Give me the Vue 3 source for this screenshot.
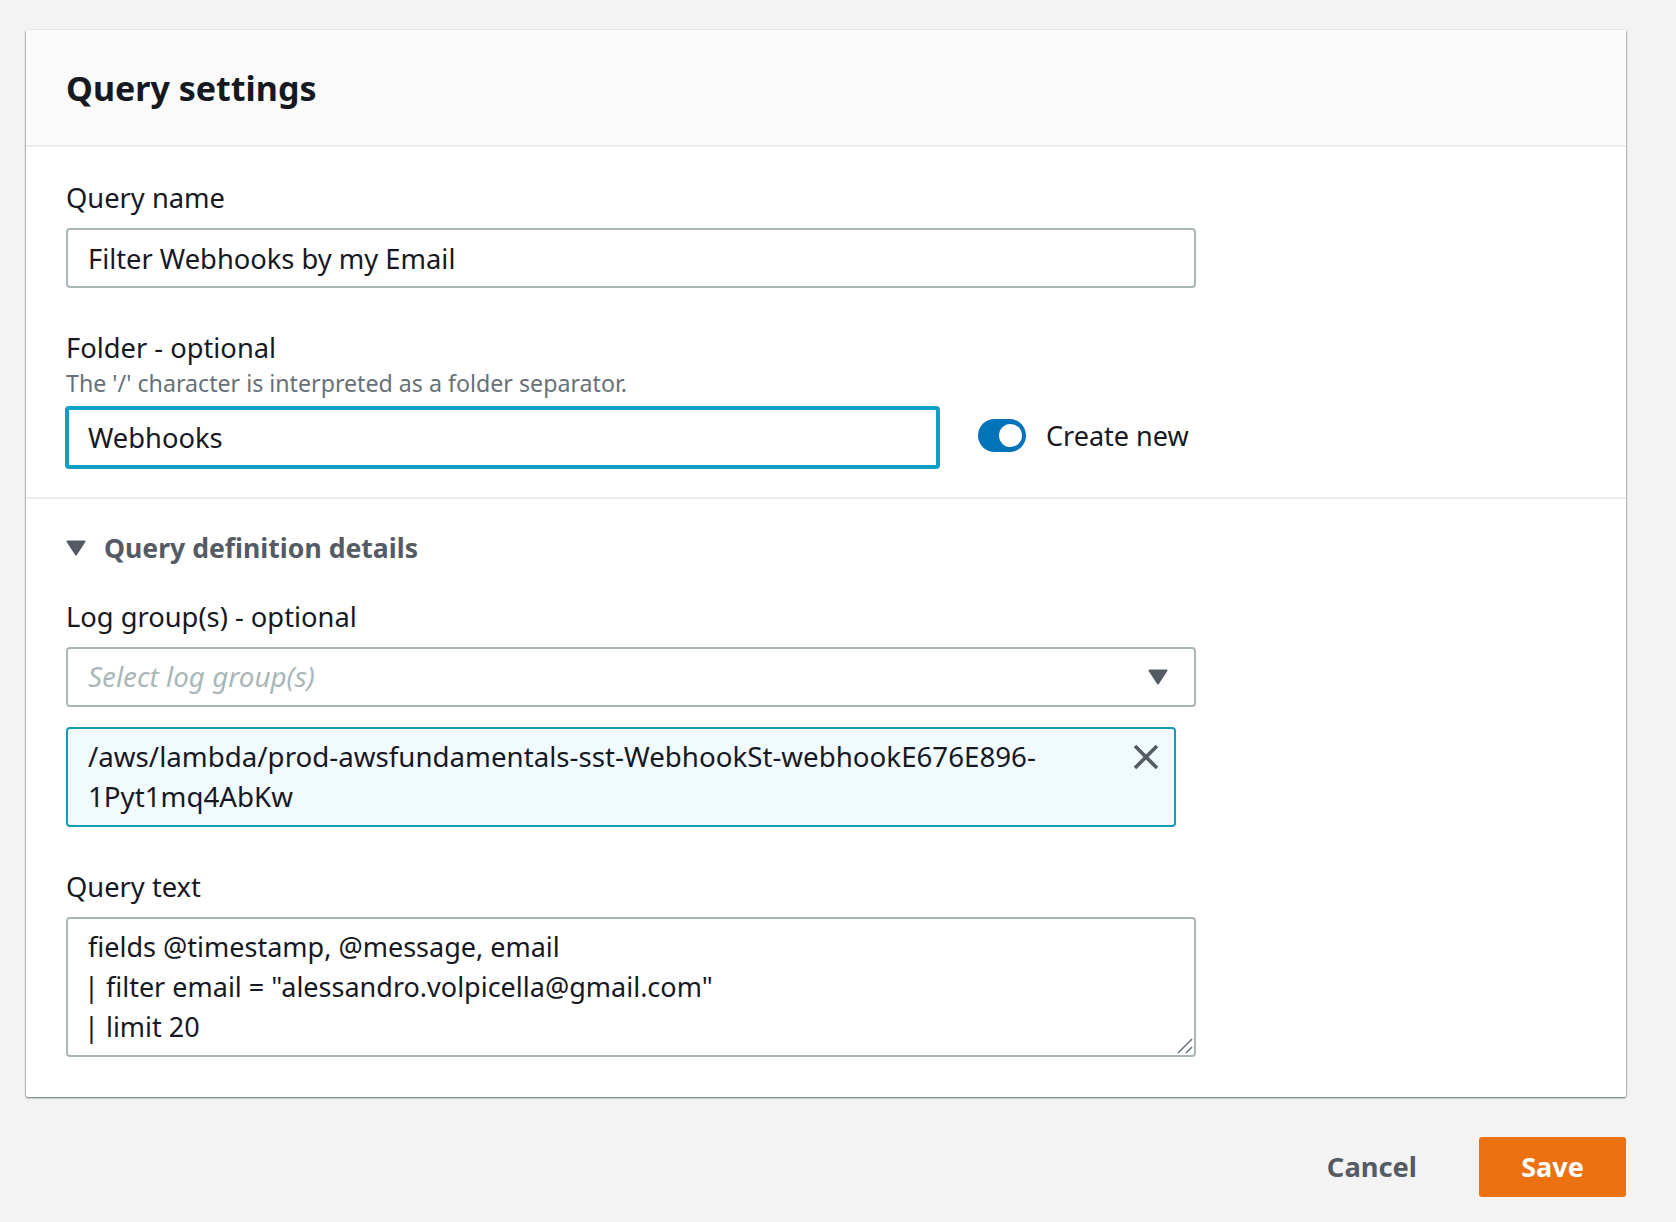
<script setup>
const queryLines = [
  { bar: false, text: 'fields @timestamp, @message, email' },
  { bar: true, text: ' filter email = "alessandro.volpicella@gmail.com"' },
  { bar: true, text: ' limit 20' },
]
const tokenLines = ['/aws/lambda/prod-awsfundamentals-sst-WebhookSt-webhookE676E896-', '1Pyt1mq4AbKw']
</script>

<template>
  <div class="page">
    <section class="card">
      <header class="card-head"><h2>Query settings</h2></header>
      <div class="block first">
        <div class="label">Query name</div>
        <div class="field wide"><span>Filter Webhooks by my Email</span></div>
        <div class="label folder-label">Folder - optional</div>
        <div class="hint">The '/' character is interpreted as a folder separator.</div>
        <div class="folder-row">
          <div class="field focus"><span>Webhooks</span></div>
          <div class="toggle-wrap">
            <span class="toggle"><span class="knob"></span></span>
            <span class="toggle-text">Create new</span>
          </div>
        </div>
      </div>
      <div class="block second">
        <div class="expander">
          <svg class="caret" viewBox="0 0 20 16"><path d="M1.5 1.5h17L10 14.5z" fill="#545b64" stroke="#545b64" stroke-width="2" stroke-linejoin="round"/></svg>
          <span>Query definition details</span>
        </div>
        <div class="label log-label">Log group(s) - optional</div>
        <div class="field wide select">
          <span class="placeholder">Select log group(s)</span>
          <svg class="select-caret" viewBox="0 0 20 16"><path d="M1.5 1.5h17L10 14.5z" fill="#545b64" stroke="#545b64" stroke-width="2" stroke-linejoin="round"/></svg>
        </div>
        <div class="token">
          <div v-for="l in tokenLines" :key="l" class="line">{{ l }}</div>
          <svg class="close" viewBox="0 0 26 26"><path d="M2 2l22 22M24 2L2 24" fill="none" stroke="#545b64" stroke-width="3.6"/></svg>
        </div>
        <div class="label text-label">Query text</div>
        <div class="textarea">
          <div v-for="l in queryLines" :key="l.text" class="line"><span v-if="l.bar" class="bar">|</span>{{ l.text }}</div>
          <svg class="grip" viewBox="0 0 16 16"><path d="M1 15L15 1M9 15l6-6" fill="none" stroke="#687078" stroke-width="1.5"/></svg>
        </div>
      </div>
    </section>
    <footer class="actions">
      <span class="cancel">Cancel</span>
      <span class="save">Save</span>
    </footer>
  </div>
</template>

<style>
html, body { margin: 0; background: #f3f3f3; }
</style>

<style scoped>
.page {
  width: 1676px;
  height: 1222px;
  box-sizing: border-box;
  padding: 30px 50px 0 26px;
  background: #f3f3f3;
  font-family: "Noto Sans", "Open Sans", sans-serif;
  font-size: 27.3px;
  color: #16191f;
}
.card {
  background: #fff;
  border-radius: 2px;
  box-shadow: 0 1px 2px rgba(0, 28, 36, 0.6), 1px 0 1px rgba(0, 28, 36, 0.15), -1px 0 1px rgba(0, 28, 36, 0.15);
  height: 1067px;
}
.card-head {
  height: 117px;
  box-sizing: border-box;
  background: #fafafa;
  border-bottom: 2px solid #eaeded;
  padding-left: 40px;
  display: flex;
  align-items: center;
}
h2 {
  margin: 0;
  font-size: 34px;
  line-height: 48px;
  font-weight: 700;
}
.block { padding: 0 40px; }
.first { padding-top: 31px; height: 352px; box-sizing: border-box; border-bottom: 2px solid #eaeded; }
.second { padding-top: 29px; }
.label { line-height: 40px; height: 40px; }
.field {
  box-sizing: border-box;
  height: 60px;
  margin-top: 10px;
  padding: 0 20px;
  border: 2px solid #aab7b8;
  border-radius: 4px;
  display: flex;
  align-items: center;
  background: #fff;
}
.wide { width: 1130px; }
.folder-label { margin-top: 40px; }
.hint { font-size: 23.2px; line-height: 36px; color: #687078; margin-top: -3px; }
.folder-row { display: flex; align-items: center; margin-top: 5px; }
.focus {
  width: 875px;
  height: 63px;
  margin-top: 0;
  margin-left: -1px;
  border: 4px solid #0ea0c5;
  padding-left: 19px;
}
.toggle-wrap { display: flex; align-items: center; margin-left: 38px; margin-top: -4px; }
.toggle {
  width: 48px;
  height: 33px;
  border-radius: 17px;
  background: #0073bb;
  position: relative;
}
.knob {
  position: absolute;
  right: 4px;
  top: 5px;
  width: 23px;
  height: 23px;
  border-radius: 50%;
  background: #fff;
}
.toggle-text { margin-left: 20px; font-size: 27px; }
.expander {
  display: flex;
  align-items: center;
  height: 40px;
  font-size: 26.6px;
  font-weight: 700;
  color: #545b64;
}
.caret { width: 20px; height: 16px; margin-right: 18px; margin-top: -1px; }
.log-label { margin-top: 29px; }
.select { position: relative; margin-top: 10px; }
.placeholder { font-style: italic; color: #aab7b8; font-size: 27.8px; padding-bottom: 2px; }
.select-caret { position: absolute; right: 26px; top: 20px; width: 20px; height: 16px; }
.token {
  position: relative;
  box-sizing: border-box;
  width: 1110px;
  height: 100px;
  margin-top: 20px;
  padding: 7px 20px 9px;
  border: 2px solid #169bb4;
  border-radius: 4px;
  background: #f1faff;
  font-size: 27.7px;
}
.line { line-height: 40px; height: 40px; white-space: pre; }
.bar { margin-left: -4px; }
.close { position: absolute; right: 15px; top: 15px; width: 26px; height: 26px; }
.text-label { margin-top: 40px; }
.textarea {
  position: relative;
  box-sizing: border-box;
  width: 1130px;
  height: 140px;
  margin-top: 10px;
  padding: 8px 20px 8px;
  border: 2px solid #aab7b8;
  border-radius: 4px;
  font-size: 27px;
}
.grip { position: absolute; right: 1px; bottom: 1px; width: 16px; height: 16px; }
.actions {
  display: flex;
  justify-content: flex-end;
  align-items: center;
  margin-top: 40px;
}
.cancel { font-weight: 700; color: #545b64; margin-right: 62px; padding-bottom: 2px; }
.save {
  width: 147px;
  height: 60px;
  box-sizing: border-box;
  padding-bottom: 2px;
  border-radius: 3px;
  background: #ec7211;
  color: #fff;
  font-size: 27px;
  font-weight: 700;
  display: flex;
  align-items: center;
  justify-content: center;
}
</style>
